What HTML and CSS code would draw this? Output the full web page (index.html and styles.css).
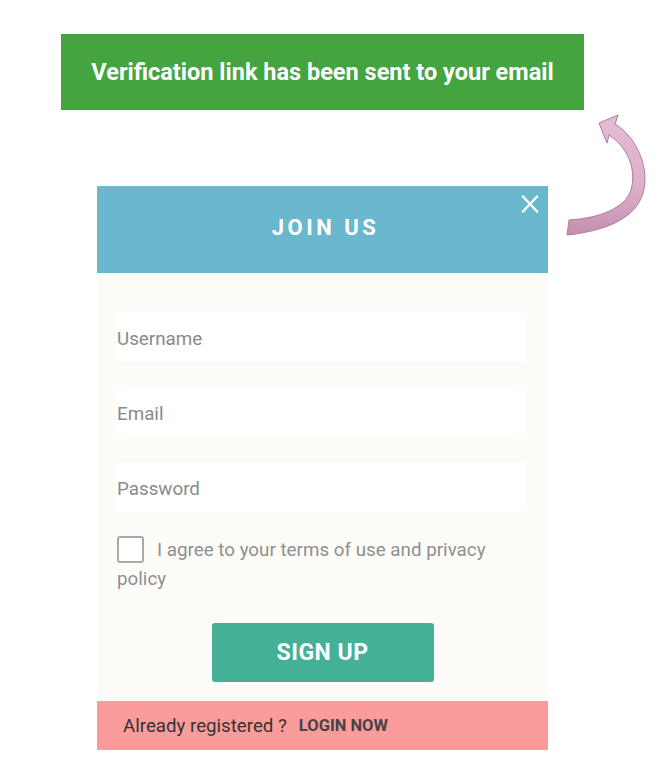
FILE: index.html
```html
<!DOCTYPE html>
<html lang="en">
<head>
<meta charset="utf-8">
<title>Join Us</title>
<link rel="stylesheet" href="styles.css">
</head>
<body>
<div class="page">
  <div class="notice">Verification link has been sent to your email</div>
  <svg class="arrow" width="100" height="130" viewBox="555 110 100 130" xmlns="http://www.w3.org/2000/svg">
    <defs>
      <linearGradient id="ag" x1="0" y1="0" x2="0" y2="1">
        <stop offset="0" stop-color="#e3bcd3"/>
        <stop offset="0.6" stop-color="#dcb0c9"/>
        <stop offset="1" stop-color="#c38fae"/>
      </linearGradient>
    </defs>
    <path d="M599 123 L618 115 L615 124 C638 138 650 170 643 193 C636 218 606 231 567 235 L569 220 C600 218 625 208 631 190 C637 168 627 147 609 135 L607 143 Z" fill="url(#ag)" stroke="#b47a9c" stroke-width="1" stroke-linejoin="round"/>
  </svg>
  <div class="modal">
    <div class="modal-head">
      <h1 class="title">JOIN US</h1>
      <svg class="close" width="18" height="18" viewBox="0 0 18 18" xmlns="http://www.w3.org/2000/svg">
        <path d="M2 1.5 L16 16.5 M16 1.5 L2 16.5" stroke="#ffffff" stroke-width="2.4" stroke-linecap="round"/>
      </svg>
    </div>
    <div class="modal-body">
      <div class="field">Username</div>
      <div class="field">Email</div>
      <div class="field">Password</div>
      <p class="agree"><span class="box"></span>I agree to your terms of use and privacy policy</p>
      <div class="actions"><button class="signup">SIGN UP</button></div>
    </div>
    <div class="modal-foot">
      <span class="already">Already registered ?</span>
      <span class="login">LOGIN NOW</span>
    </div>
  </div>
</div>
</body>
</html>
```
FILE: styles.css
```css
html, body {
  margin: 0;
  padding: 0;
  background: #ffffff;
}
body {
  font-family: Roboto, "Liberation Sans", Arial, sans-serif;
}
.page {
  position: relative;
  width: 654px;
  height: 782px;
  padding-top: 34px;
  box-sizing: border-box;
}
.notice {
  margin-left: 61px;
  width: 523px;
  height: 76px;
  background: #43a440;
  color: #ffffff;
  font-weight: 700;
  font-size: 23.5px;
  display: flex;
  align-items: center;
  justify-content: center;
}
.arrow {
  position: absolute;
  left: 555px;
  top: 110px;
}
.modal {
  margin-top: 76px;
  margin-left: 97px;
  width: 451px;
}
.modal-head {
  position: relative;
  height: 87px;
  background: #69b8cd;
  display: flex;
  align-items: center;
  justify-content: center;
}
.title {
  margin: 0 0 4px 0;
  color: #ffffff;
  font-size: 22px;
  font-weight: 700;
  letter-spacing: 3.5px;
  padding-left: 6px;
}
.close {
  position: absolute;
  right: 9px;
  top: 9px;
}
.modal-body {
  background: #fdfcf9;
  padding: 40px 22px 19px 19px;
}
.field {
  height: 48px;
  box-sizing: border-box;
  padding-top: 3px;
  background: #ffffff;
  color: #8a8a8a;
  font-size: 18.8px;
  display: flex;
  align-items: center;
  padding-left: 1px;
  margin-bottom: 27px;
}
.field:nth-child(3) {
  margin-bottom: 25px;
}
.agree {
  margin: 0;
  font-size: 18.8px;
  line-height: 29px;
  color: #8f8f8f;
  padding-left: 1px;
}
.box {
  display: inline-block;
  width: 23px;
  height: 23px;
  border: 2px solid #a9a9a9;
  border-radius: 3px;
  vertical-align: -7px;
  margin-right: 13px;
  background: #ffffff;
}
.actions {
  display: flex;
  justify-content: center;
  margin-top: 29px;
  padding-left: 3px;
}
.signup {
  width: 222px;
  height: 59px;
  border: none;
  border-radius: 3px;
  background: #44b197;
  color: #ffffff;
  font-family: Roboto, "Liberation Sans", Arial, sans-serif;
  font-size: 23px;
  font-weight: 700;
  letter-spacing: 0.5px;
}
.modal-foot {
  height: 49px;
  background: #fc9b9b;
  display: flex;
  align-items: center;
  padding-left: 26px;
  gap: 12px;
}
.already {
  font-size: 18.7px;
  color: #333333;
}
.login {
  font-size: 16.5px;
  font-weight: 700;
  color: #444444;
}
```
